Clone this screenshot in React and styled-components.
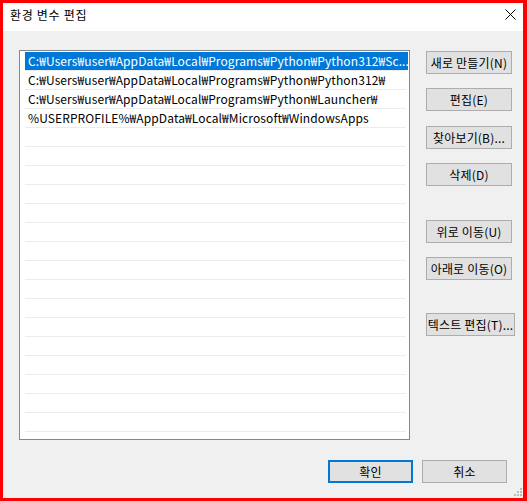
import React from 'react';
import styled, { createGlobalStyle } from 'styled-components';

const GlobalStyle = createGlobalStyle`
  html, body {
    margin: 0;
    padding: 0;
    width: 527px;
    height: 501px;
    overflow: hidden;
    background: #ff0000;
  }
  * {
    box-sizing: border-box;
  }
`;

const paths = [
  'C:₩Users₩user₩AppData₩Local₩Programs₩Python₩Python312₩Sc...',
  'C:₩Users₩user₩AppData₩Local₩Programs₩Python₩Python312₩',
  'C:₩Users₩user₩AppData₩Local₩Programs₩Python₩Launcher₩',
  '%USERPROFILE%₩AppData₩Local₩Microsoft₩WindowsApps',
];

const sideButtons = [
  { label: '새로 만들기(N)', gap: 0 },
  { label: '편집(E)', gap: 14 },
  { label: '찾아보기(B)...', gap: 15 },
  { label: '삭제(D)', gap: 14 },
  { label: '위로 이동(U)', gap: 34 },
  { label: '아래로 이동(O)', gap: 14 },
  { label: '텍스트 편집(T)...', gap: 33, wide: true },
];

export default function App() {
  const rows = Array.from({ length: 20 }, (_, i) => paths[i] || '');

  return (
    <Frame>
      <GlobalStyle />
      <Dialog>
        <TitleBar>
          <Title>환경 변수 편집</Title>
          <CloseButton>
            <svg width="11" height="11" viewBox="0 0 11 11">
              <path d="M0.5 0.5 L10.5 10.5 M10.5 0.5 L0.5 10.5" stroke="#000" strokeWidth="1" fill="none" />
            </svg>
          </CloseButton>
        </TitleBar>
        <Body>
          <MainRow>
            <ListBox>
              {rows.map((text, i) => (
                <Row key={i} $selected={i === 0}>
                  {text}
                </Row>
              ))}
            </ListBox>
            <ButtonColumn>
              {sideButtons.map((b) => (
                <SideButton key={b.label} $gap={b.gap} $wide={b.wide}>
                  {b.label}
                </SideButton>
              ))}
            </ButtonColumn>
          </MainRow>
          <Footer>
            <FooterButton $primary>확인</FooterButton>
            <FooterButton>취소</FooterButton>
          </Footer>
          <Grip>
            <svg width="10" height="10" viewBox="0 0 10 10">
              <rect x="7" y="0" width="2" height="2" fill="#bcbcbc" />
              <rect x="4" y="3" width="2" height="2" fill="#bcbcbc" />
              <rect x="7" y="3" width="2" height="2" fill="#bcbcbc" />
              <rect x="1" y="6" width="2" height="2" fill="#bcbcbc" />
              <rect x="4" y="6" width="2" height="2" fill="#bcbcbc" />
              <rect x="7" y="6" width="2" height="2" fill="#bcbcbc" />
            </svg>
          </Grip>
        </Body>
      </Dialog>
    </Frame>
  );
}

const Frame = styled.div`
  width: 527px;
  height: 501px;
  padding: 3px 4px 3px 3px;
  background: #ff0000;
  font-family: "Noto Sans CJK KR", "Noto Sans", sans-serif;
  font-size: 12px;
  color: #000;
`;

const Dialog = styled.div`
  width: 100%;
  height: 100%;
  display: flex;
  flex-direction: column;
  background: #f0f0f0;
`;

const TitleBar = styled.div`
  height: 28px;
  flex: none;
  display: flex;
  align-items: center;
  justify-content: space-between;
  padding: 0 7px 1px 7px;
  background: #ffffff;
`;

const Title = styled.div`
  font-size: 12px;
  line-height: 16px;
  letter-spacing: 0.7px;
  padding-bottom: 3px;
`;

const CloseButton = styled.div`
  width: 11px;
  height: 11px;
  display: flex;
  margin-bottom: 4px;
`;

const Body = styled.div`
  position: relative;
  flex: 1;
  display: flex;
  flex-direction: column;
  padding: 19px 16px 0 16px;
`;

const MainRow = styled.div`
  display: flex;
  align-items: flex-start;
  gap: 16px;
`;

const ListBox = styled.div`
  width: 391px;
  height: 390px;
  flex: none;
  border: 1px solid #828790;
  background: #ffffff;
  padding-top: 1px;
  overflow: hidden;
`;

const Row = styled.div`
  position: relative;
  height: 19px;
  margin: 0 1px 0 5px;
  padding: 0 0 1px 3px;
  line-height: 18px;
  letter-spacing: 0.1px;
  white-space: nowrap;
  overflow: hidden;
  color: ${({ $selected }) => ($selected ? '#ffffff' : '#000000')};
  background: ${({ $selected }) =>
    $selected ? 'linear-gradient(#0078d7, #0078d7) top / 100% 18px no-repeat' : 'transparent'};

  &::after {
    content: '';
    position: absolute;
    left: -4px;
    right: 2px;
    bottom: 0;
    height: 1px;
    background: #ececec;
  }
`;

const ButtonColumn = styled.div`
  display: flex;
  flex-direction: column;
  align-items: flex-start;
  padding-top: 1px;
`;

const SideButton = styled.div`
  width: ${({ $wide }) => ($wide ? '89px' : '86px')};
  height: 23px;
  margin-top: ${({ $gap }) => $gap}px;
  display: flex;
  align-items: center;
  justify-content: center;
  white-space: nowrap;
  background: #e1e1e1;
  border: 1px solid #adadad;
  font-size: 12px;
  line-height: 14px;
  letter-spacing: 0.2px;
`;

const Footer = styled.div`
  display: flex;
  justify-content: flex-end;
  gap: 9px;
  margin-top: 20px;
`;

const FooterButton = styled.div`
  width: 85px;
  height: 23px;
  display: flex;
  align-items: center;
  justify-content: center;
  background: #e1e1e1;
  border: ${({ $primary }) => ($primary ? '2px solid #0078d7' : '1px solid #adadad')};
  font-size: 12px;
  line-height: 14px;
  letter-spacing: 0.3px;
`;

const Grip = styled.div`
  position: absolute;
  right: 0;
  bottom: 0;
  width: 10px;
  height: 10px;
  display: flex;
`;
